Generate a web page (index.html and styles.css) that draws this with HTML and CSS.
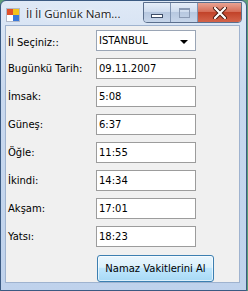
FILE: index.html
```html
<!DOCTYPE html>
<html lang="tr">
<head>
    <meta charset="UTF-8">
    <title>İl İl Günlük Namaz Vakitleri</title>
    <link rel="stylesheet" href="styles.css">
</head>
<body>

<div class="window">
    <div class="titlebar">
        <svg class="app-icon" width="14" height="14" viewBox="0 0 14 14">
            <rect x="0.5" y="0.5" width="13" height="13" fill="#ffffff" stroke="#b0b8c8"/>
            <rect x="1" y="1" width="6" height="6" fill="#e0502a"/>
            <rect x="7" y="1" width="6" height="6" fill="#f2c21c"/>
            <rect x="7" y="7" width="6" height="6" fill="#3a78d8"/>
        </svg>
        <span class="title">İl İl Günlük Nam...</span>
        <div class="caption-buttons">
            <div class="cap-btn min-btn"><span class="min-glyph"></span></div>
            <div class="cap-btn max-btn"><span class="max-glyph"></span></div>
            <div class="cap-btn close-btn">
                <svg width="16" height="12" viewBox="0 0 16 12">
                    <path d="M3 1 L13 11 M13 1 L3 11" stroke="#4a1a10" stroke-width="4" fill="none" stroke-linecap="round"/>
                    <path d="M3 1 L13 11 M13 1 L3 11" stroke="#ffffff" stroke-width="2.2" fill="none" stroke-linecap="round"/>
                </svg>
            </div>
        </div>
    </div>

    <div class="client">
        <div class="form">
            <label>İl Seçiniz::</label>
            <div class="combo">
                <span>ISTANBUL</span>
                <span class="arrow"></span>
            </div>

            <label>Bugünkü Tarih:</label>
            <div class="textbox">09.11.2007</div>

            <label>İmsak:</label>
            <div class="textbox">5:08</div>

            <label>Güneş:</label>
            <div class="textbox">6:37</div>

            <label>Öğle:</label>
            <div class="textbox">11:55</div>

            <label>İkindi:</label>
            <div class="textbox">14:34</div>

            <label>Akşam:</label>
            <div class="textbox">17:01</div>

            <label>Yatsı:</label>
            <div class="textbox">18:23</div>
        </div>

        <div class="button-row">
            <button class="fetch-button">Namaz Vakitlerini Al</button>
        </div>
    </div>
</div>

</body>
</html>
```

FILE: styles.css
```css
body {
    margin: 0;
    background-color: #5e9e78;
    font-family: "DejaVu Sans", sans-serif;
    font-size: 10px;
    color: #000;
}
.window {
    width: 247px;
    height: 291px;
    box-sizing: border-box;
    border: 1px solid #3b5a82;
    border-radius: 6px 6px 0 0;
    background: linear-gradient(to bottom, #dfe9f6 0%, #c9d9ef 30%, #bfd2ec 100%);
    display: flex;
    flex-direction: column;
}
.titlebar {
    height: 25px;
    display: flex;
    align-items: flex-start;
    position: relative;
}
.app-icon {
    margin: 7px 0 0 5px;
}
.title {
    font-family: "Open Sans", sans-serif;
    font-size: 11.5px;
    margin: 5px 0 0 6px;
    color: #1a1a1a;
    text-shadow: 0 0 6px #ffffff, 0 0 3px #ffffff;
}
.caption-buttons {
    position: absolute;
    top: 1px;
    right: 4px;
    display: flex;
    height: 19px;
    border: 1px solid #5b6f8d;
    border-radius: 0 0 4px 4px;
    overflow: hidden;
}
.cap-btn {
    display: flex;
    align-items: center;
    justify-content: center;
}
.min-btn, .max-btn {
    width: 26px;
    background: linear-gradient(to bottom, #e6eef9 0%, #cfdcee 45%, #b7c8e0 50%, #c7d6ea 100%);
    border-right: 1px solid #8094b2;
}
.min-glyph {
    width: 10px;
    height: 2px;
    margin-top: 6px;
    background-color: #ffffff;
    border: 1px solid #3e4e68;
}
.max-glyph {
    width: 9px;
    height: 7px;
    border: 1px solid #8a9ab4;
    border-top-width: 2px;
    box-sizing: content-box;
}
.close-btn {
    width: 43px;
    background: linear-gradient(to bottom, #e9a393 0%, #d66e58 45%, #c2432a 50%, #d4644a 100%);
}
.client {
    flex: 1;
    margin: 1px 6px 7px 4px;
    background-color: #f0f0f0;
    border: 1px solid #9fb3cf;
    padding: 4px 0 0 2px;
}
.form {
    display: grid;
    grid-template-columns: 88px 100px;
    grid-auto-rows: 21px;
    row-gap: 7px;
}
.form label {
    display: flex;
    align-items: center;
    white-space: nowrap;
}
.form label:first-of-type {
    margin-bottom: -3px;
}
.combo, .textbox {
    box-sizing: border-box;
    background-color: #ffffff;
    border: 1px solid #9c9c9c;
    display: flex;
    align-items: center;
    padding-left: 2px;
}
.combo {
    justify-content: space-between;
    padding-right: 7px;
    height: 21px;
    margin-bottom: -3px;
    border-color: #9aa5b5;
}
.arrow {
    width: 0;
    height: 0;
    border-left: 4px solid transparent;
    border-right: 4px solid transparent;
    border-top: 4px solid #000;
    margin-top: 2px;
}
.button-row {
    padding: 8px 0 0 89px;
}
.fetch-button {
    width: 117px;
    height: 27px;
    font-family: "DejaVu Sans", sans-serif;
    font-size: 10px;
    color: #000;
    border: 1px solid #3c7fb1;
    border-radius: 3px;
    background: linear-gradient(to bottom, #eaf6fd 0%, #d9f0fc 45%, #bee6fd 50%, #a7d9f5 100%);
    box-shadow: inset 0 0 0 1px rgba(255, 255, 255, 0.6);
    padding: 0;
}
```
